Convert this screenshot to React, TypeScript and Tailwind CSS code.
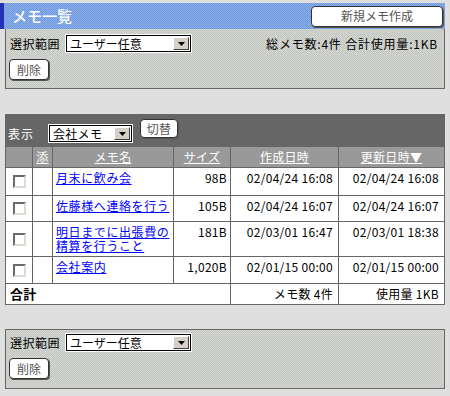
import React from "react";

const PANEL =
  "bg-[repeating-conic-gradient(#c2c5c0_0_25%,#d5d7d3_0_50%)] bg-[length:2px_2px]";
const BLUE =
  "bg-[repeating-conic-gradient(#6e97de_0_25%,#8cb0ea_0_50%)] bg-[length:2px_2px]";

function Arrow() {
  return (
    <div className="flex h-full w-[16px] items-center justify-center border border-t-white border-l-white border-b-[#404040] border-r-[#404040] bg-[#d4d0c8]">
      <svg width="7" height="4" viewBox="0 0 7 4">
        <polygon points="0,0 7,0 3.5,4" fill="#000" />
      </svg>
    </div>
  );
}

function Select({ label, className }: { label: string; className: string }) {
  return (
    <div className={`flex h-[19px] border border-white ${className}`}>
      <div className="flex flex-1 items-center border border-black bg-white">
        <span className="flex-1 pl-[3px] text-[12px] leading-[14px] text-black">{label}</span>
        <div className="h-full p-[1px]">
          <Arrow />
        </div>
      </div>
    </div>
  );
}

function Btn({ children, className }: { children: React.ReactNode; className: string }) {
  return (
    <button
      className={`flex items-center justify-center rounded-[4px] border border-[#333] bg-white text-[12px] leading-[14px] text-[#555] shadow-[1px_1px_0_#555] ${className}`}
    >
      {children}
    </button>
  );
}

function Check() {
  return (
    <span className="block h-[13px] w-[13px] border-2 border-t-[#6a6a6a] border-l-[#6a6a6a] border-b-[#dcdcd4] border-r-[#dcdcd4] bg-white" />
  );
}

type Row = { name: string[]; size: string; c: string; u: string; h: string };

const rows: Row[] = [
  { name: ["月末に飲み会"], size: "98B", c: "02/04/24 16:08", u: "02/04/24 16:08", h: "h-[28px]" },
  { name: ["佐藤様へ連絡を行う"], size: "105B", c: "02/04/24 16:07", u: "02/04/24 16:07", h: "h-[26px]" },
  { name: ["明日までに出張費の", "精算を行うこと"], size: "181B", c: "02/03/01 16:47", u: "02/03/01 18:38", h: "h-[35px]" },
  { name: ["会社案内"], size: "1,020B", c: "02/01/15 00:00", u: "02/01/15 00:00", h: "h-[27px]" },
];

function SelectPanel({ top }: { top: boolean }) {
  return (
    <div
      className={`ml-[5px] h-[60px] w-[440px] border-[#666] ${top ? "border-x border-b pt-[5px]" : "border pt-[3px]"} ${PANEL}`}
    >
      <div className="flex items-center pl-[4px] pr-[6px]">
        <span className="leading-[14px] tracking-[0.5px]">選択範囲</span>
        <Select label="ユーザー任意" className="ml-[5px] w-[127px]" />
        {top && <span className="ml-auto leading-[14px] tracking-[0.8px]">総メモ数:4件 合計使用量:1KB</span>}
      </div>
      <Btn className="ml-[3px] mt-[6px] h-[21px] w-[40px]">削除</Btn>
    </div>
  );
}

export default function App() {
  return (
    <div className="h-[396px] w-[450px] overflow-hidden bg-[#dfdfdf] pt-[3px] font-['Noto_Sans_CJK_JP',sans-serif] text-[12px] leading-[14px] text-black">
      {/* title bar */}
      <div className={`flex h-[26px] w-[445px] items-center border-l-4 border-[#2433b4] pl-[8px] pr-[2px] ${BLUE}`}>
        <span className="text-[15px] font-medium leading-[18px] text-white">メモ一覧</span>
        <Btn className="ml-auto h-[21px] w-[132px]">新規メモ作成</Btn>
      </div>

      <SelectPanel top />

      {/* table section */}
      <div className="ml-[5px] mt-[25px] w-[440px] border-x border-[#666] tracking-[0.3px]">
        <div className="flex h-[33px] items-start bg-[#666] pl-[2px] text-white">
          <span className="mt-[13px] w-[40px] leading-[14px] tracking-[1px]">表示</span>
          <Select label="会社メモ" className="mt-[10px] w-[85px]" />
          <Btn className="ml-[7px] mt-[5px] h-[19px] w-[38px]">切替</Btn>
        </div>
        {/* header */}
        <div className="flex h-[21px] border-b border-[#666] bg-[#999] text-white">
          <div className="w-[27px] border-r border-[#666]" />
          <div className="flex w-[20px] items-center justify-center border-r border-[#666] underline">添</div>
          <div className="flex w-[121px] items-center justify-center border-r border-[#666] underline">メモ名</div>
          <div className="flex w-[57px] items-center justify-center border-r border-[#666] underline">サイズ</div>
          <div className="flex w-[108px] items-center justify-center border-r border-[#666] underline">作成日時</div>
          <div className="flex w-[105px] items-center justify-center underline">更新日時▼</div>
        </div>
        {rows.map((r, i) => (
          <div key={i} className={`flex border-b border-[#666] bg-white ${r.h}`}>
            <div className="flex w-[27px] items-center justify-center border-r border-[#666]">
              <Check />
            </div>
            <div className="w-[20px] border-r border-[#666]" />
            <div className="w-[121px] border-r border-[#666] pl-[3px] pt-[3px] tracking-[0.6px]">
              <a href="#" className="text-[#0000ff] underline">
                {r.name.map((n, j) => (
                  <span key={j} className="block">
                    {n}
                  </span>
                ))}
              </a>
            </div>
            <div className="w-[57px] border-r border-[#666] pr-[3px] pt-[3px] text-right">{r.size}</div>
            <div className="w-[108px] border-r border-[#666] pr-[5px] pt-[3px] text-right">{r.c}</div>
            <div className="w-[105px] pr-[5px] pt-[3px] text-right">{r.u}</div>
          </div>
        ))}
        <div className="flex h-[21px] border-b border-[#666] bg-white">
          <div className="flex w-[225px] items-center border-r border-[#666] pl-[4px] text-[13px] font-bold">合計</div>
          <div className="flex w-[108px] items-center justify-end border-r border-[#666] pr-[5px]">メモ数 4件</div>
          <div className="flex w-[105px] items-center justify-end pr-[5px]">使用量 1KB</div>
        </div>
      </div>

      <div className="mt-[24px]">
        <SelectPanel top={false} />
      </div>
    </div>
  );
}
